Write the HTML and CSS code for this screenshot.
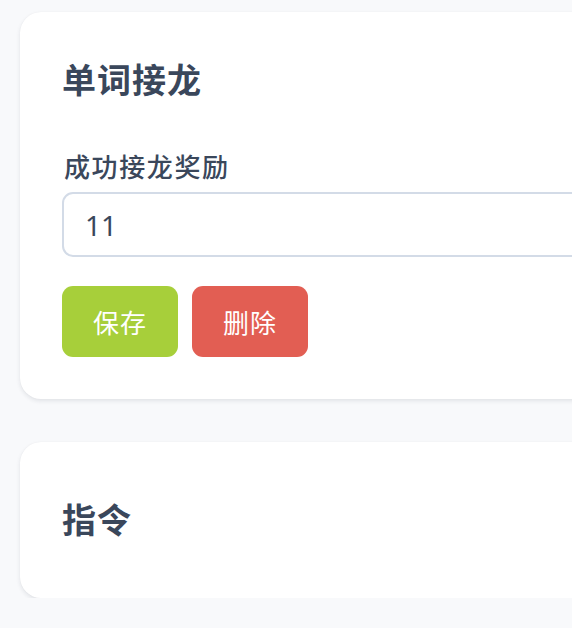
FILE: index.html
```html
<!DOCTYPE html>
<html lang="zh">
<head>
<meta charset="utf-8">
<link rel="stylesheet" href="styles.css">
</head>
<body>
<div class="page">
  <section class="card">
    <h2 class="card-title">单词接龙</h2>
    <label class="field-label" for="reward">成功接龙奖励</label>
    <input class="field-input" id="reward" type="text" value="11">
    <div class="actions">
      <button class="btn btn-save">保存</button>
      <button class="btn btn-delete">删除</button>
    </div>
  </section>
  <section class="card card-compact">
    <div class="card-header">
      <h2 class="card-title">指令</h2>
    </div>
  </section>
</div>
</body>
</html>
```

FILE: styles.css
```css
html, body {
  margin: 0;
  padding: 0;
  background: #f8f9fb;
  overflow: hidden;
}
body {
  font-family: "Noto Sans", "Noto Sans CJK SC", sans-serif;
  color: #3a475b;
}
.page {
  display: flex;
  flex-direction: column;
  gap: 43px;
  padding: 12px 0 0 20px;
  width: 700px;
}
.card {
  background: #ffffff;
  border-radius: 21px;
  padding: 42px;
  box-shadow: 0 2px 4px rgba(30, 41, 59, 0.10), 0 0 1px rgba(30, 41, 59, 0.06);
  display: flex;
  flex-direction: column;
}
.card-title {
  margin: 0 0 40px 0;
  font-size: 34px;
  line-height: 52px;
  font-weight: 700;
  color: #3a475b;
  letter-spacing: 1px;
}
.card-compact .card-header {
  min-height: 72px;
  display: flex;
  align-items: center;
}
.card-compact .card-title {
  margin: 0;
}
.field-label {
  display: block;
  font-size: 26px;
  line-height: 42px;
  font-weight: 500;
  color: #3a475b;
  margin: 0 0 4px 2px;
  letter-spacing: 1.6px;
}
.field-input {
  display: block;
  box-sizing: border-box;
  height: 65px;
  width: 100%;
  border: 2px solid #d3dbe7;
  border-radius: 11px;
  padding: 0 21px;
  font-family: "Noto Sans", "Noto Sans CJK SC", sans-serif;
  font-size: 28px;
  color: #3a475b;
  background: #ffffff;
  outline: none;
}
.actions {
  display: flex;
  gap: 14px;
  margin-top: 29px;
}
.btn {
  width: 116px;
  height: 71px;
  border: none;
  border-radius: 11px;
  font-family: "Noto Sans CJK SC", sans-serif;
  font-size: 26px;
  color: #ffffff;
  letter-spacing: 1px;
  padding: 0;
  cursor: pointer;
}
.btn-save {
  background: #a7cf3a;
}
.btn-delete {
  background: #e25e53;
}
```
